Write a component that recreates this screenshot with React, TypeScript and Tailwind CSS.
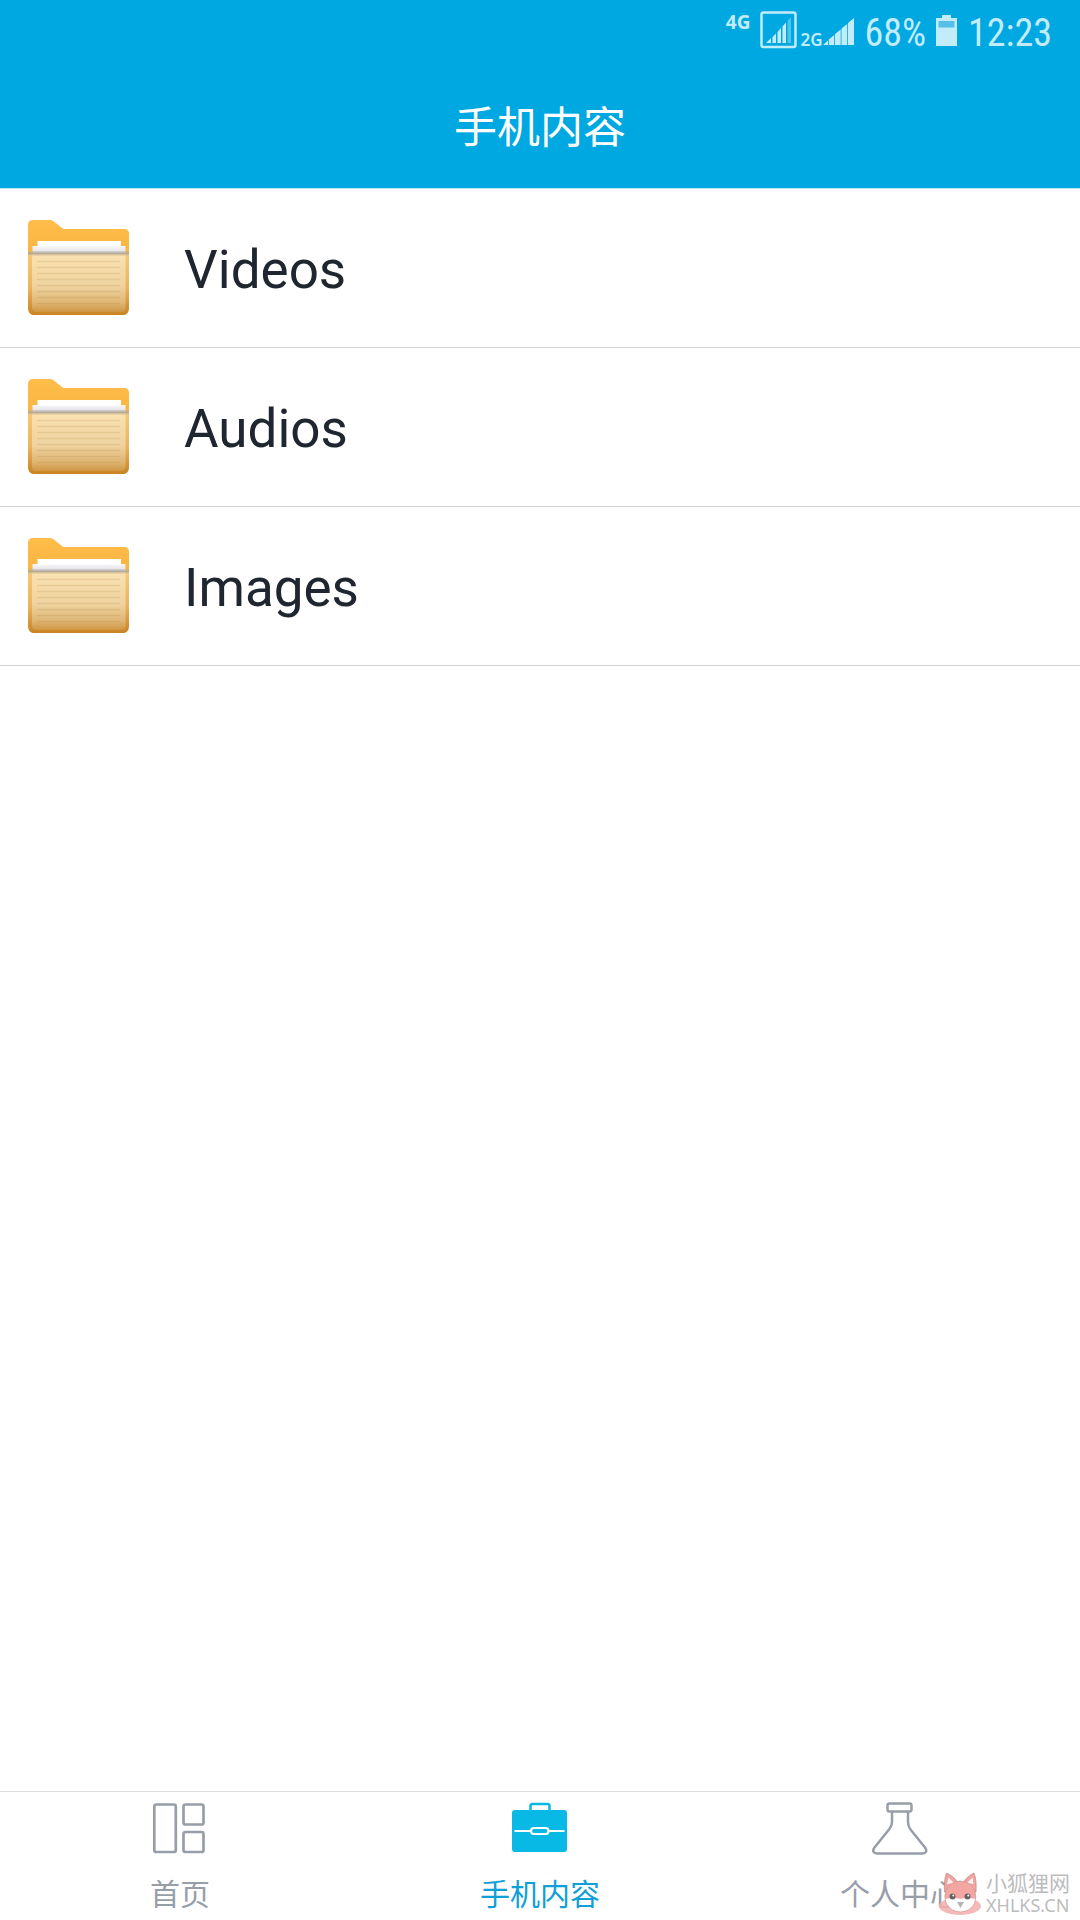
import { useState } from 'react';
import type { ReactNode } from 'react';

interface TabItem {
  id: string;
  label: string;
  icon: ReactNode;
}

const FOLDERS = ['Videos', 'Audios', 'Images'];

function FolderIcon() {
  return (
    <svg viewBox="0 0 101 96" className="h-24 w-[101px] shrink-0" aria-hidden="true">
      <defs>
        <linearGradient id="folder-back" x1="0" y1="0" x2="0" y2="1">
          <stop offset="0" stopColor="#ffbd49" />
          <stop offset="1" stopColor="#f5ad3a" />
        </linearGradient>
        <linearGradient id="folder-front" x1="0" y1="0" x2="0" y2="1">
          <stop offset="0" stopColor="#f5c878" />
          <stop offset="0.55" stopColor="#ebb45d" />
          <stop offset="1" stopColor="#c98322" />
        </linearGradient>
        <linearGradient id="folder-sheet" x1="0" y1="0" x2="0" y2="1">
          <stop offset="0" stopColor="#fae2b2" />
          <stop offset="0.55" stopColor="#efd3a0" />
          <stop offset="0.85" stopColor="#deb573" />
          <stop offset="1" stopColor="#cf9642" />
        </linearGradient>
        <linearGradient id="folder-paper" x1="0" y1="0" x2="0" y2="1">
          <stop offset="0" stopColor="#f8f8fa" />
          <stop offset="0.6" stopColor="#e6e6ec" />
          <stop offset="1" stopColor="#c8c6cb" />
        </linearGradient>
        <linearGradient id="folder-lip" x1="0" y1="0" x2="0" y2="1">
          <stop offset="0" stopColor="#b8b2ac" stopOpacity="0.3" />
          <stop offset="0.5" stopColor="#b0a48e" stopOpacity="0.85" />
          <stop offset="1" stopColor="#e2c898" stopOpacity="0.4" />
        </linearGradient>
      </defs>
      <path
        d="M5 0H22C24 0 25 0.8 26.500 2L34 8C35 8.700 35.500 9 37 9H96C99 9 101 10.500 101 13.500V60H0V5C0 2 2 0 5 0Z"
        fill="url(#folder-back)"
      />
      <path d="M4.500 26H97.500V34H4.500Z" fill="url(#folder-paper)" />
      <path d="M9.500 21H93V26.500H9.500Z" fill="#ffffff" />
      <path d="M0 34H101V88C101 92.500 98.500 95 95 95H6C2.500 95 0 92.500 0 88Z" fill="url(#folder-front)" />
      <path d="M4 34H97.500V87.500C97.500 90.500 96 92 93 92H8C5.500 92 4 90.500 4 87.500Z" fill="url(#folder-sheet)" />
      <path
        d="M9 41.500H92M9 47.500H92M9 53.500H92M9 59.500H92M9 65.500H92M9 71.500H92M9 77.500H92M9 83.500H92"
        stroke="#a8792f"
        strokeOpacity="0.17"
        strokeWidth="1.500"
      />
      <path d="M0 31H101V36H0Z" fill="url(#folder-lip)" />
    </svg>
  );
}

function GridIcon() {
  return (
    <svg viewBox="0 0 56 56" className="size-14" fill="none" stroke="currentColor" strokeWidth="2.700" aria-hidden="true">
      <rect x="2.300" y="2.500" width="21.500" height="47.500" rx="2" />
      <rect x="31.500" y="2.500" width="20" height="20" rx="2" />
      <rect x="31.500" y="30" width="20" height="20" rx="2" />
    </svg>
  );
}

function BriefcaseIcon() {
  return (
    <svg viewBox="0 0 56 56" className="size-14" aria-hidden="true">
      <path d="M18.500 10V4Q18.500 2 20.500 2H35.500Q37.500 2 37.500 4V10" fill="none" stroke="#08b9e6" strokeWidth="2.500" />
      <rect x="0" y="8" width="55" height="42" rx="3" fill="#08b9e6" />
      <path d="M2.500 29H19.500M36.500 29H52.500" stroke="#fff" strokeWidth="2.200" />
      <rect x="19" y="26" width="17.500" height="6" rx="3" fill="none" stroke="#fff" strokeWidth="2.200" />
    </svg>
  );
}

function FlaskIcon() {
  return (
    <svg viewBox="0 0 56 56" className="size-14" fill="none" stroke="currentColor" strokeWidth="2.500" aria-hidden="true">
      <rect x="15.500" y="1.500" width="24" height="8" rx="2" />
      <path d="M20 10V20C20 24 19 25 17 27.500L2.500 45.500C0 49 1.500 51.500 5 51.500H50.500C54 51.500 55.500 49 53 45.500L38.500 27.500C36.500 25 36 24 36 20V10" />
    </svg>
  );
}

const TABS: TabItem[] = [
  { id: 'home', label: '首页', icon: <GridIcon /> },
  { id: 'phone', label: '手机内容', icon: <BriefcaseIcon /> },
  { id: 'me', label: '个人中心', icon: <FlaskIcon /> },
];

function StatusBar() {
  return (
    <div className="flex h-16 items-start justify-end pr-7 text-[#c3ecfb]">
      <span className="mt-2 mr-[10px] font-['Noto_Sans',sans-serif] text-[19px] leading-7 font-bold">4G</span>
      <svg viewBox="0 0 38 38" className="mt-[11px] mr-[2px] size-[38px]" aria-hidden="true">
        <rect x="1.500" y="1.500" width="34" height="34.500" rx="2" fill="none" stroke="currentColor" strokeWidth="2.500" />
        <path d="M6 32L11 27V32ZM12.500 26L16 22.500V32H12.500ZM17.500 21L21 17V32H17.500ZM22.500 15.500L26 11.500V32H22.500Z" fill="currentColor" />
        <path d="M27.500 10L31 6V32H27.500Z" fill="currentColor" opacity="0.4" />
      </svg>
      <span className="mt-7 font-['Noto_Sans',sans-serif] text-[17px] leading-6 font-semibold">2G</span>
      <svg viewBox="0 0 32 28" className="mt-[18px] mr-[10px] h-7 w-8" aria-hidden="true">
        <path d="M0 27L5 22.500V27ZM5.800 21.500L11.200 17V27H5.800ZM12 16L17.700 11.500V27H12ZM18.500 10.500L24.200 6V27H18.500ZM25 5L31 0V27H25Z" fill="currentColor" />
      </svg>
      <span className="mt-[13px] mr-[10px] font-['Roboto_Condensed','Liberation_Sans_Narrow',Roboto,sans-serif] text-[38px] leading-10">68%</span>
      <svg viewBox="0 0 22 32" className="mt-[15px] mr-[10px] h-8 w-[22px]" aria-hidden="true">
        <path d="M6 0H15V3H21V31H0V3H6Z" fill="currentColor" />
        <path d="M2.500 6H18.500V12.500H2.500Z" fill="#55bfe8" />
      </svg>
      <span className="mt-[13px] font-['Roboto_Condensed','Liberation_Sans_Narrow',Roboto,sans-serif] text-[38px] leading-10">12:23</span>
    </div>
  );
}

function Watermark() {
  return (
    <div className="pointer-events-none absolute right-[10px] bottom-1 flex items-center gap-1 text-[#bcbcbe]">
      <svg viewBox="0 0 44 44" className="size-11" aria-hidden="true">
        <ellipse cx="22" cy="34" rx="21" ry="9" fill="#f3aeab" fillOpacity="0.85" />
        <path d="M6.500 20C6 12 6.500 6 8.500 1C13 3 17 6 19.500 10C21.500 9.500 23.500 9.500 25.500 10C28 6 32 3 36 1C38 6 38.500 12 38 20Z" fill="#f2a39f" stroke="#b98b86" strokeWidth="0.700" />
        <path d="M9 12L10.500 5.500L16 11ZM35.500 12L34.500 5.500L29 11Z" fill="#fff" fillOpacity="0.85" />
        <ellipse cx="22.300" cy="24.500" rx="15.500" ry="15.500" fill="#f4a6a2" stroke="#c39590" strokeWidth="0.600" />
        <path d="M7.500 27C12 25.500 18 26 22.300 27C27 26 32 25.500 37.200 27C36.500 34 30 39.500 22.300 39.500C14.500 39.500 8.500 34 7.500 27Z" fill="#fff" />
        <circle cx="14.500" cy="24.500" r="3" fill="#686067" />
        <circle cx="29.500" cy="24.500" r="3" fill="#686067" />
        <circle cx="15.300" cy="23.500" r="1" fill="#fff" />
        <circle cx="30.300" cy="23.500" r="1" fill="#fff" />
        <path d="M19 30H26L22.500 36Z" fill="#b5b3b6" />
      </svg>
      <div className="flex flex-col">
        <span className="text-[21px] leading-[22px]">小狐狸网</span>
        <span className="font-['Noto_Sans',sans-serif] text-[18px] leading-5">XHLKS.CN</span>
      </div>
    </div>
  );
}

export default function App() {
  const [active, setActive] = useState('phone');

  return (
    <div className="relative flex min-h-screen flex-col bg-white font-[Roboto,'Noto_Sans_CJK_SC',sans-serif]">
      <header className="border-b border-[#b5e5f6] bg-[#00a8e2]">
        <StatusBar />
        <h1 className="h-31 text-center text-[43px] leading-32 text-white">手机内容</h1>
      </header>

      <main className="flex-1">
        <ul>
          {FOLDERS.map((name) => (
            <li key={name} className="border-b border-[#d0d2d4]">
              <button type="button" className="flex h-[158px] w-full items-center gap-[55px] px-7 text-left">
                <FolderIcon />
                <span className="pt-1 text-[53px] leading-16 text-[#20262f]">{name}</span>
              </button>
            </li>
          ))}
        </ul>
      </main>

      <nav className="grid h-[129px] grid-cols-3 border-t border-[#dcdddf]">
        {TABS.map((tab) => (
          <button
            key={tab.id}
            type="button"
            onClick={() => setActive(tab.id)}
            className={`flex flex-col items-center gap-[17px] pt-[10px] text-[30px] leading-10 ${
              active === tab.id ? 'text-[#109fd6]' : 'text-[#989ea8]'
            }`}
          >
            {tab.icon}
            <span>{tab.label}</span>
          </button>
        ))}
      </nav>

      <Watermark />
    </div>
  );
}
